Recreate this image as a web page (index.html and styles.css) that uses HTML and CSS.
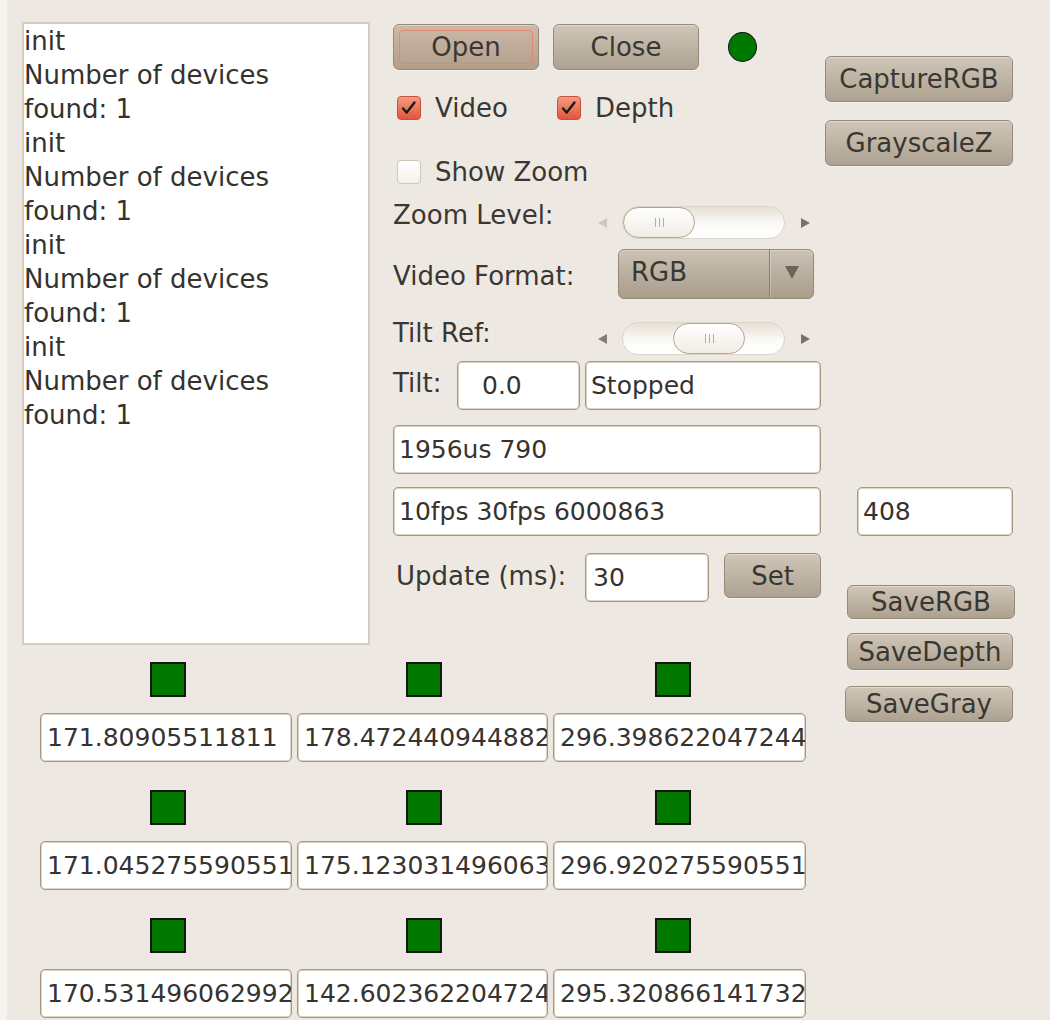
FILE: index.html
```html
<!DOCTYPE html>
<html lang="en">
<head>
<meta charset="utf-8">
<title>Kinect Control</title>
<link rel="stylesheet" href="styles.css">
</head>
<body>
<div class="window">
  <div class="main">
    <div class="left">
      <div class="top">
        <div class="log">
          <div>init</div>
          <div>Number of devices</div>
          <div>found: 1</div>
          <div>init</div>
          <div>Number of devices</div>
          <div>found: 1</div>
          <div>init</div>
          <div>Number of devices</div>
          <div>found: 1</div>
          <div>init</div>
          <div>Number of devices</div>
          <div>found: 1</div>
        </div>

        <div class="controls">
          <div class="row row-buttons">
            <button class="btn btn-main btn-focus"><span class="focus-ring">Open</span></button>
            <button class="btn btn-main">Close</button>
            <span class="led"></span>
          </div>

          <div class="row row-checks">
            <label class="check check-video">
              <span class="box box-on"><svg viewBox="0 0 24 24" width="24" height="24"><path d="M5.5 12.5 L9.5 17 L18 6" fill="none" stroke="#1c1a18" stroke-width="2.6" stroke-linecap="round" stroke-linejoin="round"/></svg></span>
              <span>Video</span>
            </label>
            <label class="check">
              <span class="box box-on"><svg viewBox="0 0 24 24" width="24" height="24"><path d="M5.5 12.5 L9.5 17 L18 6" fill="none" stroke="#1c1a18" stroke-width="2.6" stroke-linecap="round" stroke-linejoin="round"/></svg></span>
              <span>Depth</span>
            </label>
          </div>

          <div class="row row-zoomcheck">
            <label class="check">
              <span class="box"></span>
              <span>Show Zoom</span>
            </label>
          </div>

          <div class="row row-zoom">
            <span class="label label-slider">Zoom Level:</span>
            <div class="slider slider-zoom">
              <span class="arrow arrow-left arrow-dim"></span>
              <div class="trough">
                <div class="thumb" style="margin-left: 0px"><i></i><i></i><i></i></div>
              </div>
              <span class="arrow arrow-right"></span>
            </div>
          </div>

          <div class="row row-format">
            <span class="label label-format">Video Format:</span>
            <div class="combo">
              <span class="combo-text">RGB</span>
              <span class="combo-button"><span class="combo-arrow"></span></span>
            </div>
          </div>

          <div class="row row-tiltref">
            <span class="label label-slider">Tilt Ref:</span>
            <div class="slider slider-tilt">
              <span class="arrow arrow-left"></span>
              <div class="trough">
                <div class="thumb" style="margin-left: 50px"><i></i><i></i><i></i></div>
              </div>
              <span class="arrow arrow-right"></span>
            </div>
          </div>

          <div class="row row-tilt">
            <span class="label label-tilt">Tilt:</span>
            <div class="entry entry-tilt">0.0</div>
            <div class="entry entry-status">Stopped</div>
          </div>

          <div class="row row-wide row-timing">
            <div class="entry entry-wide">1956us 790</div>
          </div>

          <div class="row row-wide row-fps">
            <div class="entry entry-wide">10fps 30fps 6000863</div>
          </div>

          <div class="row row-update">
            <span class="label label-update">Update (ms):</span>
            <div class="entry entry-update">30</div>
            <button class="btn btn-set">Set</button>
          </div>
        </div>
      </div>

      <div class="sensors">
        <div class="sensor"><span class="indicator"></span><div class="entry entry-value">171.80905511811</div></div>
        <div class="sensor"><span class="indicator"></span><div class="entry entry-value">178.47244094488219</div></div>
        <div class="sensor"><span class="indicator"></span><div class="entry entry-value">296.39862204724409</div></div>
        <div class="sensor"><span class="indicator"></span><div class="entry entry-value">171.04527559055118</div></div>
        <div class="sensor"><span class="indicator"></span><div class="entry entry-value">175.12303149606302</div></div>
        <div class="sensor"><span class="indicator"></span><div class="entry entry-value">296.92027559055118</div></div>
        <div class="sensor"><span class="indicator"></span><div class="entry entry-value">170.53149606299212</div></div>
        <div class="sensor"><span class="indicator"></span><div class="entry entry-value">142.60236220472441</div></div>
        <div class="sensor"><span class="indicator"></span><div class="entry entry-value">295.32086614173228</div></div>
      </div>
    </div>

    <div class="side">
      <button class="btn btn-side btn-capture">CaptureRGB</button>
      <button class="btn btn-side btn-gray">GrayscaleZ</button>
      <div class="entry entry-count">408</div>
      <button class="btn btn-save save-rgb">SaveRGB</button>
      <button class="btn btn-save save-depth">SaveDepth</button>
      <button class="btn btn-save save-gray">SaveGray</button>
    </div>
  </div>
</div>
</body>
</html>
```

FILE: styles.css
```css
html, body {
  margin: 0;
  padding: 0;
}

body {
  background: #f6f4f0;
}

.window {
  margin-left: 7px;
  min-height: 1020px;
  box-sizing: border-box;
  padding: 22px 0 0 15px;
  background: #ede9e2;
  font-family: "DejaVu Sans", "Liberation Sans", sans-serif;
  font-size: 26px;
  color: #3a3733;
}

.main {
  display: flex;
  align-items: flex-start;
}

.left {
  display: flex;
  flex-direction: column;
}

.top {
  display: flex;
  gap: 23px;
}

/* message log */
.log {
  width: 348px;
  height: 623px;
  box-sizing: border-box;
  border: 2px solid #d6cdbd;
  background: #ffffff;
  line-height: 34px;
  color: #35322e;
  overflow: hidden;
}

/* middle control column */
.controls {
  width: 428px;
  padding-top: 2px;
  display: flex;
  flex-direction: column;
}

.row {
  display: flex;
  align-items: flex-start;
}

.row-buttons {
  height: 46px;
  align-items: center;
}

.row-checks {
  margin-top: 26px;
  height: 24px;
  align-items: center;
  padding-left: 4px;
}

.row-zoomcheck {
  margin-top: 40px;
  height: 24px;
  align-items: center;
  padding-left: 4px;
}

.row-zoom {
  margin-top: 16px;
}

.row-format {
  margin-top: 10px;
}

.row-tiltref {
  margin-top: 19px;
}

.row-tilt {
  margin-top: 6px;
}

.row-timing {
  margin-top: 15px;
}

.row-fps {
  margin-top: 13px;
}

.row-update {
  margin-top: 17px;
}

/* buttons */
.btn {
  font: inherit;
  color: #3a3733;
  padding: 0;
  margin: 0;
  box-sizing: border-box;
  border: 1px solid #978b77;
  border-radius: 6px;
  background: linear-gradient(#cfc6b8, #ada290);
  box-shadow: inset 0 1px 0 rgba(255, 255, 255, 0.35), 0 1px 0 rgba(255, 255, 255, 0.4);
  display: flex;
  align-items: center;
  justify-content: center;
  line-height: 30px;
}

.btn-main {
  width: 146px;
  height: 46px;
}

.btn-main + .btn-main {
  margin-left: 14px;
}

.btn-focus {
  background: linear-gradient(#cdb9a8, #b39e8c);
  padding: 5px;
}

.focus-ring {
  flex: 1;
  align-self: stretch;
  display: flex;
  align-items: center;
  justify-content: center;
  border: 1.5px solid #e5866d;
  border-radius: 4px;
}

.led {
  width: 27px;
  height: 28px;
  margin-left: 29px;
  border-radius: 50%;
  background: #007800;
  border: 1.5px solid #141414;
}

.btn-set {
  width: 97px;
  height: 45px;
  margin-left: 15px;
}

/* check boxes */
.check {
  display: flex;
  align-items: center;
  gap: 14px;
}

.check-video {
  width: 160px;
}

.box {
  width: 24px;
  height: 24px;
  box-sizing: border-box;
  border-radius: 4px;
  border: 1px solid #cfc6b7;
  background: linear-gradient(#ffffff, #f4f1ec);
  display: flex;
  align-items: center;
  justify-content: center;
  overflow: hidden;
}

.box-on {
  border-color: #c9503a;
  background: linear-gradient(#f59a82, #e0563b);
}

/* labels */
.label {
  white-space: nowrap;
  line-height: 30px;
}

.label-slider {
  width: 205px;
}

.label-format {
  width: 225px;
  margin-top: 12px;
}

.label-tilt {
  width: 64px;
  margin-top: 7px;
}

.label-update {
  width: 192px;
  padding-left: 3px;
  box-sizing: border-box;
  margin-top: 8px;
}

/* sliders */
.slider {
  display: flex;
  align-items: center;
}

.slider-zoom {
  margin-top: 6px;
}

.slider-tilt {
  margin-top: 4px;
}

.arrow {
  width: 0;
  height: 0;
  border-top: 5px solid transparent;
  border-bottom: 5px solid transparent;
}

.arrow-left {
  border-right: 9px solid #857c70;
}

.arrow-dim {
  border-right-color: #cfc8bd;
}

.arrow-right {
  border-left: 9px solid #7b7266;
  margin-left: 16px;
}

.trough {
  width: 163px;
  height: 33px;
  margin-left: 15px;
  box-sizing: border-box;
  border: 1px solid #ddd5c8;
  border-radius: 16px;
  background: linear-gradient(#e6dfd3, #fbfaf8 55%, #ffffff);
  display: flex;
  align-items: stretch;
}

.thumb {
  width: 72px;
  box-sizing: border-box;
  border: 1.5px solid #b1a58f;
  border-radius: 16px;
  background: linear-gradient(#ffffff, #f1ece4);
  display: flex;
  align-items: center;
  justify-content: center;
  gap: 3px;
}

.thumb i {
  display: block;
  width: 1px;
  height: 9px;
  background: #b9ae9e;
}

/* combo box */
.combo {
  width: 196px;
  height: 50px;
  box-sizing: border-box;
  border: 1px solid #968a77;
  border-radius: 6px;
  background: linear-gradient(#cbc2b4, #a99d8b);
  box-shadow: inset 0 1px 0 rgba(255, 255, 255, 0.3);
  display: flex;
  align-items: stretch;
}

.combo-text {
  flex: 1;
  padding-left: 12px;
  line-height: 30px;
  display: flex;
  align-items: center;
  padding-bottom: 4px;
}

.combo-button {
  width: 43px;
  border-left: 1px solid #8c816f;
  box-shadow: inset 1px 0 0 rgba(255, 255, 255, 0.25);
  display: flex;
  align-items: center;
  justify-content: center;
}

.combo-arrow {
  width: 0;
  height: 0;
  border-left: 7px solid transparent;
  border-right: 7px solid transparent;
  border-top: 13px solid #6c655b;
  margin-bottom: 4px;
}

/* text entries */
.entry {
  box-sizing: border-box;
  height: 49px;
  background: #ffffff;
  border: 1px solid #a5987f;
  box-shadow: inset 0 0 0 1px #ddd4c4;
  border-radius: 5px;
  padding: 0 5px;
  font-size: 25px;
  color: #36332f;
  display: flex;
  align-items: center;
  white-space: nowrap;
  overflow: hidden;
}

.entry-tilt {
  width: 123px;
  padding-left: 24px;
}

.entry-status {
  width: 236px;
  margin-left: 5px;
}

.entry-wide {
  width: 428px;
}

.entry-update {
  width: 124px;
  padding-left: 7px;
}

.entry-count {
  width: 156px;
  margin-left: 32px;
  margin-top: 321px;
}

.entry-value {
  width: 100%;
  padding-left: 6px;
}

/* sensor readouts */
.sensors {
  margin-top: 17px;
  margin-left: 18px;
  display: grid;
  grid-template-columns: 252px 251px 253px;
  column-gap: 5px;
  row-gap: 28px;
}

.sensor {
  display: flex;
  flex-direction: column;
  align-items: center;
  gap: 16px;
}

.indicator {
  width: 36px;
  height: 35px;
  box-sizing: border-box;
  border: 2px solid #151515;
  background: #007800;
}

.sensor:nth-child(3n+1) .indicator {
  margin-left: 4px;
}

.sensor:nth-child(3n+2) .indicator {
  margin-left: 3px;
}

.sensor:nth-child(3n) .indicator {
  margin-right: 14px;
}

/* right column */
.side {
  margin-left: 4px;
  display: flex;
  flex-direction: column;
  align-items: flex-start;
}

.btn-side {
  width: 188px;
  height: 46px;
}

.btn-capture {
  margin-top: 34px;
}

.btn-gray {
  margin-top: 18px;
}

.btn-save {
  width: 168px;
}

.save-rgb {
  height: 34px;
  margin-top: 49px;
  margin-left: 22px;
}

.save-depth {
  height: 37px;
  margin-top: 14px;
  margin-left: 22px;
  width: 166px;
}

.save-gray {
  height: 36px;
  margin-top: 16px;
  margin-left: 20px;
}
```
